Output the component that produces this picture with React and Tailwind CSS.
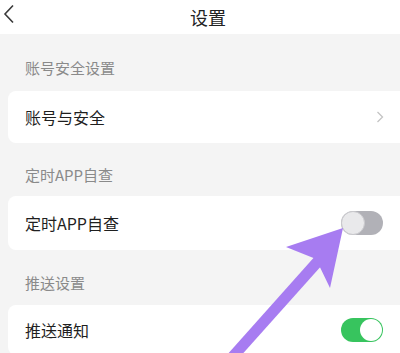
import React from "react";

const font = { fontFamily: '"Noto Sans CJK SC", "Noto Sans", sans-serif' };

const Toggle = ({ on }) =>
  on ? (
    <div className="relative h-[24px] w-[42px] rounded-full bg-[#37c45e]">
      <div className="absolute right-[1px] top-[1px] h-[22px] w-[22px] rounded-full bg-white" />
    </div>
  ) : (
    <div className="relative h-[24px] w-[42px] rounded-full bg-[#b1b1b7]">
      <div className="absolute left-0 top-0 h-[24px] w-[24px] rounded-full border border-[#c9c9cd] bg-[#e9e9eb]" />
    </div>
  );

const SectionLabel = ({ children, h, pt }) => (
  <div className={`${h} ${pt} pl-[25px] text-[15px] leading-[22px] text-[#8a8a8a]`}>{children}</div>
);

const Row = ({ h, children, right }) => (
  <div className={`ml-2 flex ${h} items-center justify-between rounded-l-lg bg-white pl-[17px] pr-[17px]`}>
    <span className="text-[16px] text-[#1f1f1f]">{children}</span>
    {right}
  </div>
);

export default function App() {
  return (
    <div className="relative h-[353px] w-[400px] overflow-hidden bg-[#f4f4f4]" style={font}>
      {/* header */}
      <div className="relative flex h-[34px] items-center justify-center bg-white pl-[16px]">
        <svg className="absolute left-[3px] top-[4px]" width="12" height="20" viewBox="0 0 12 20">
          <path d="M10 1.5 L2 10 L10 18.5" fill="none" stroke="#3a3a3a" strokeWidth="1.6" />
        </svg>
        <span className="text-[18px] text-[#222]">设置</span>
      </div>

      <SectionLabel h="h-[57px]" pt="pt-[23px]">账号安全设置</SectionLabel>
      <Row
        h="h-[52px]"
        right={
          <svg width="8" height="12" viewBox="0 0 8 12" className="mr-[-1px]">
            <path d="M1.5 1 L6.5 6 L1.5 11" fill="none" stroke="#c4c4c4" strokeWidth="1.3" />
          </svg>
        }
      >
        账号与安全
      </Row>

      <SectionLabel h="h-[53px]" pt="pt-[21px]">定时APP自查</SectionLabel>
      <Row h="h-[54px]" right={<Toggle on={false} />}>
        定时APP自查
      </Row>

      <SectionLabel h="h-[55px]" pt="pt-[22px]">推送设置</SectionLabel>
      <Row h="h-[50px]" right={<Toggle on />}>
        推送通知
      </Row>

      {/* annotation arrow */}
      <svg className="pointer-events-none absolute left-0 top-0" width="400" height="353" viewBox="0 0 400 353">
        <line x1="228" y1="362" x2="320" y2="259" stroke="#a77cf1" strokeWidth="11" />
        <polygon points="343,228 286,247 316,259 330,288" fill="#a77cf1" />
      </svg>
    </div>
  );
}
